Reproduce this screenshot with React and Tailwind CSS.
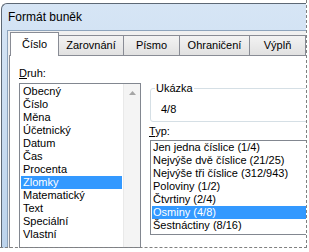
import React from 'react';

const druh = ['Obecný', 'Číslo', 'Měna', 'Účetnický', 'Datum', 'Čas', 'Procenta', 'Zlomky', 'Matematický', 'Text', 'Speciální', 'Vlastní'];
const typ = ['Jen jedna číslice (1/4)', 'Nejvýše dvě číslice (21/25)', 'Nejvýše tři číslice (312/943)', 'Poloviny (1/2)', 'Čtvrtiny (2/4)', 'Osminy (4/8)', 'Šestnáctiny (8/16)'];

const tabs = [
  { label: 'Zarovnání', w: 'w-[65px]' },
  { label: 'Písmo', w: 'w-[56px]' },
  { label: 'Ohraničení', w: 'w-[70px]' },
  { label: 'Výplň', w: 'w-[56px]' },
];

export default function App() {
  return (
    <div className="w-[309px] h-[252px] bg-white overflow-hidden relative" style={{ fontFamily: '"Liberation Sans", Arial, sans-serif' }}>
      {/* window */}
      <div className="ml-[1px] mt-[3px] w-[305px] h-[245px] rounded-tl-[6px] border-l border-t border-[#5d6875] bg-gradient-to-b from-[#d6e5f5] to-[#bcd3ec] overflow-hidden flex flex-col">
        <div className="h-[26px] shrink-0 pl-[6px] pt-[6px] text-[12px] leading-[14px] text-black">Formát buněk</div>

        {/* client area */}
        <div className="ml-[5px] flex-1 bg-[#f0f0f0] border-l border-t border-[#8ea4bc] flex flex-col">
          {/* tabs */}
          <div className="mt-[1px] h-[23px] shrink-0 flex items-end pl-[2px] text-[11px] text-black">
            <div className="w-[54px] h-[24px] -mb-[1px] bg-white border border-b-0 border-[#898c95] flex items-center justify-center pb-[1px] relative z-10">Číslo</div>
            {tabs.map((t) => (
              <div key={t.label} className={`${t.w} h-[20px] shrink-0 border-t border-r border-[#898c95] bg-gradient-to-b from-[#f3f3f3] to-[#e1e1e1] flex items-center justify-center`}>{t.label}</div>
            ))}
          </div>

          {/* panel */}
          <div className="ml-[1px] flex-1 bg-white border-l border-t border-[#898c95] flex pl-[9px] pt-[11px] text-[11px] text-black">
            {/* Druh */}
            <div className="w-[122px] shrink-0 flex flex-col">
              <div className="h-[16px] leading-[13px]"><span className="underline">D</span>ruh:</div>
              <div className="flex-1 border border-[#828790] flex">
                <div className="flex-1 p-[1px] pt-[1px]">
                  {druh.map((d) => (
                    <div key={d} className={`h-[13px] leading-[13px] pl-[2px] ${d === 'Zlomky' ? 'bg-[#3399ff] text-white' : ''}`}>{d}</div>
                  ))}
                </div>
                <div className="w-[17px] bg-[#f4f4f4] border-l border-[#e9e9e9] flex justify-center pt-[7px]">
                  <svg width="7" height="4" viewBox="0 0 7 4"><path d="M0 4 L3.5 0 L7 4 Z" fill="#a6a6a6" /></svg>
                </div>
              </div>
            </div>

            {/* right column */}
            <div className="ml-[8px] w-[200px] shrink-0 flex flex-col">
              <div className="ml-[1px] mt-[21px] h-[34px] border border-[#d5dfe5] rounded-[3px] relative">
                <span className="absolute -top-[7px] left-[4px] bg-white px-[1px] leading-[13px]">Ukázka</span>
                <div className="pl-[10px] pt-[14px] leading-[13px]">4/8</div>
              </div>
              <div className="mt-[3px] h-[15px] leading-[13px]"><span className="underline">T</span>yp:</div>
              <div className="ml-[1px] h-[95px] border border-[#828790] pl-[1px]">
                {typ.map((t) => (
                  <div key={t} className={`h-[13px] leading-[13px] pl-[1px] ${t.startsWith('Osminy') ? 'bg-[#3399ff] text-white' : ''}`}>{t}</div>
                ))}
              </div>
            </div>
          </div>
        </div>
      </div>

      {/* torn edges */}
      <div className="absolute left-[306px] top-0 h-[248px] border-l border-dashed border-[#808080]" />
      <div className="absolute left-0 top-[247px] w-[307px] border-t border-dashed border-[#808080]" />
      <div className="absolute left-[307px] top-0 w-[2px] h-[252px] bg-white" />
      <div className="absolute left-0 top-[248px] w-[309px] h-[4px] bg-white" />
    </div>
  );
}
